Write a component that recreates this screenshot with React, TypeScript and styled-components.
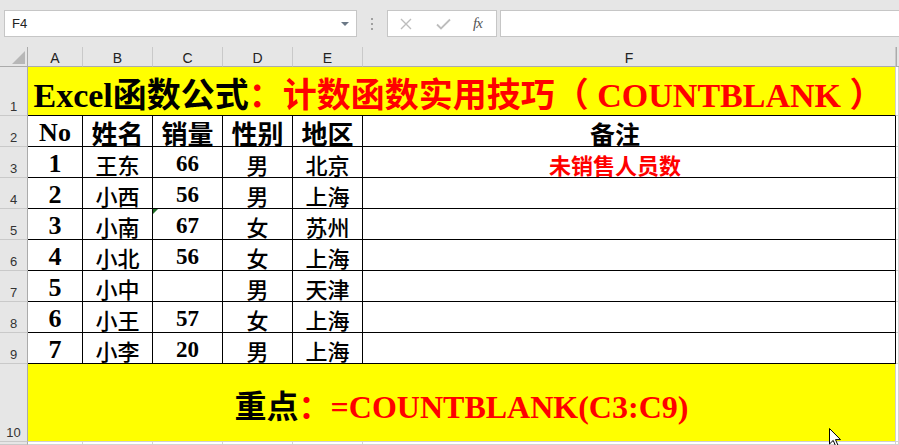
import React from "react";
import styled, { createGlobalStyle } from "styled-components";

const Global = createGlobalStyle`
  html, body { margin: 0; padding: 0; background: #ffffff; overflow: hidden; }
  body { width: 899px; height: 445px; }
  * { box-sizing: border-box; }
`;

const Page = styled.div`
  position: relative;
  width: 899px;
  height: 445px;
  overflow: hidden;
  display: flex;
  flex-direction: column;
  background: #e6e6e6;
`;

const Toolbar = styled.div`
  height: 47px;
  flex: none;
  display: flex;
  align-items: flex-start;
  padding: 10px 0 0 4px;
  background: #e6e6e6;
`;

const NameBox = styled.div`
  width: 353px;
  height: 27px;
  background: #fff;
  border: 1px solid #c6c6c6;
  display: flex;
  align-items: center;
  justify-content: space-between;
  padding: 0 7px 0 7px;
  font-family: "Liberation Sans", Arial, sans-serif;
  font-size: 13px;
  color: #222;
`;

const DropArrow = styled.span`
  width: 0;
  height: 0;
  border-left: 4px solid transparent;
  border-right: 4px solid transparent;
  border-top: 4px solid #6b7886;
`;

const Grip = styled.div`
  width: 30px;
  height: 27px;
  display: flex;
  flex-direction: column;
  align-items: center;
  justify-content: center;
  gap: 3px;
`;

const Dot = styled.span`
  width: 2px;
  height: 2px;
  background: #a0a0a0;
`;

const FxBox = styled.div`
  width: 110px;
  height: 27px;
  background: #fff;
  border: 1px solid #c6c6c6;
  display: flex;
  align-items: center;
  padding-left: 12px;
`;

const ToolIcon = styled.svg<{ $gap: number }>`
  margin-left: ${(p) => p.$gap}px;
  flex: none;
`;

const FxLabel = styled.span`
  font-family: "Liberation Serif", "Times New Roman", serif;
  font-style: italic;
  font-size: 15px;
  color: #555;
  margin-left: 22px;
  letter-spacing: -1px;
`;

const FormulaBar = styled.div`
  flex: 1;
  height: 27px;
  margin-left: 3px;
  background: #fff;
  border: 1px solid #c6c6c6;
  border-right: none;
`;

const Sheet = styled.div`
  flex: 1;
  display: grid;
  grid-template-columns: 28px 55px 70px 70px 70px 70px 533px 1fr;
  grid-template-rows: 20px 49px repeat(8, 31px) 78px 1fr;
  background: #fff;
  font-family: "Liberation Serif", "Times New Roman", "Noto Sans CJK SC", serif;
`;

const Corner = styled.div`
  position: relative;
  background: #e6e6e6;
  border-right: 1px solid #ababab;
  border-bottom: 1px solid #ababab;
  &::after {
    content: "";
    position: absolute;
    right: 2px;
    bottom: 2px;
    width: 0;
    height: 0;
    border-left: 13px solid transparent;
    border-bottom: 13px solid #b7b7b7;
  }
`;

const ColHead = styled.div`
  background: #e6e6e6;
  border-bottom: 1px solid #ababab;
  border-right: 1px solid #c9c9c9;
  display: flex;
  align-items: center;
  justify-content: center;
  padding-top: 3px;
  font-family: "Liberation Sans", Arial, sans-serif;
  font-size: 14px;
  color: #222;
`;

const RowHead = styled.div`
  background: #e6e6e6;
  border-right: 1px solid #ababab;
  border-bottom: 1px solid #c9c9c9;
  display: flex;
  align-items: flex-end;
  justify-content: center;
  padding-bottom: 1px;
  font-family: "Liberation Sans", Arial, sans-serif;
  font-size: 13px;
  line-height: 15px;
  color: #333;
`;

const Banner = styled.div<{ $size: number; $tall?: boolean }>`
  grid-column: span 6;
  background: #ffff00;
  border-right: 1px solid #d0d0d0;
  border-bottom: 1px solid ${(p) => (p.$tall ? "#d0d0d0" : "#000")};
  display: flex;
  align-items: center;
  justify-content: center;
  padding-top: 2px;
  padding-right: ${(p) => (p.$tall ? 0 : 6)}px;
  font-size: ${(p) => p.$size}px;
  font-weight: 700;
  white-space: nowrap;
  color: #000;
`;

const Red = styled.span`
  color: #ff0000;
`;

const Cell = styled.div<{ $size: number; $weight?: number; $red?: boolean; $shift?: number }>`
  position: relative;
  border-right: 1px solid #000;
  border-bottom: 1px solid #000;
  display: flex;
  align-items: center;
  justify-content: center;
  padding-top: 3px;
  padding-right: ${(p) => p.$shift ?? 0}px;
  font-size: ${(p) => p.$size}px;
  font-weight: ${(p) => p.$weight ?? 700};
  color: ${(p) => (p.$red ? "#ff0000" : "#000")};
  white-space: nowrap;
`;

const ErrorMark = styled.span`
  position: absolute;
  left: 0;
  top: 0;
  width: 0;
  height: 0;
  border-top: 5px solid #1e6b24;
  border-right: 5px solid transparent;
`;

const Blank = styled.div`
  border-right: 1px solid #d4d4d4;
  border-bottom: 1px solid #d4d4d4;
`;

const HeadBlank = styled.div`
  background: #e6e6e6;
  border-bottom: 1px solid #ababab;
  border-left: 1px solid #ababab;
`;

const Pointer = styled.svg`
  position: absolute;
  left: 829px;
  top: 428px;
`;

const cols = ["A", "B", "C", "D", "E", "F"];

type Row = { no: string; name: string; qty: string; sex: string; area: string; note?: string };

const rows: Row[] = [
  { no: "1", name: "王东", qty: "66", sex: "男", area: "北京", note: "未销售人员数" },
  { no: "2", name: "小西", qty: "56", sex: "男", area: "上海" },
  { no: "3", name: "小南", qty: "67", sex: "女", area: "苏州" },
  { no: "4", name: "小北", qty: "56", sex: "女", area: "上海" },
  { no: "5", name: "小中", qty: "", sex: "男", area: "天津" },
  { no: "6", name: "小王", qty: "57", sex: "女", area: "上海" },
  { no: "7", name: "小李", qty: "20", sex: "男", area: "上海" },
];

export default function App() {
  return (
    <>
      <Global />
      <Page>
        <Toolbar>
          <NameBox>
            <span>F4</span>
            <DropArrow />
          </NameBox>
          <Grip>
            <Dot />
            <Dot />
            <Dot />
          </Grip>
          <FxBox>
            <ToolIcon $gap={0} width="12" height="12" viewBox="0 0 12 12">
              <path d="M1 1 L11 11 M11 1 L1 11" stroke="#bdbdbd" strokeWidth="1.4" fill="none" />
            </ToolIcon>
            <ToolIcon $gap={24} width="15" height="12" viewBox="0 0 15 12">
              <path d="M1 6.5 L5 10.5 L14 1.5" stroke="#bdbdbd" strokeWidth="1.8" fill="none" />
            </ToolIcon>
            <FxLabel>fx</FxLabel>
          </FxBox>
          <FormulaBar />
        </Toolbar>
        <Sheet>
          <Corner />
          {cols.map((c) => (
            <ColHead key={c}>{c}</ColHead>
          ))}
          <HeadBlank />

          <RowHead>1</RowHead>
          <Banner $size={34}>
            Excel函数公式<Red>：计数函数实用技巧（ COUNTBLANK ）</Red>
          </Banner>
          <Blank />

          <RowHead>2</RowHead>
          <Cell $size={26}>No</Cell>
          <Cell $size={26}>姓名</Cell>
          <Cell $size={26}>销量</Cell>
          <Cell $size={26}>性别</Cell>
          <Cell $size={26}>地区</Cell>
          <Cell $size={25} $shift={28}>备注</Cell>
          <Blank />

          {rows.map((r, i) => (
            <React.Fragment key={r.no}>
              <RowHead>{i + 3}</RowHead>
              <Cell $size={26}>{r.no}</Cell>
              <Cell $size={22} $weight={500}>{r.name}</Cell>
              <Cell $size={23}>
                {i === 2 && <ErrorMark />}
                {r.qty}
              </Cell>
              <Cell $size={22} $weight={500}>{r.sex}</Cell>
              <Cell $size={22} $weight={500}>{r.area}</Cell>
              <Cell $size={22} $red $shift={28}>{r.note ?? ""}</Cell>
              <Blank />
            </React.Fragment>
          ))}

          <RowHead>10</RowHead>
          <Banner $size={32} $tall>
            重点<Red>：=COUNTBLANK(C3:C9)</Red>
          </Banner>
          <Blank />

          <RowHead />
          {cols.map((c) => (
            <Blank key={c} />
          ))}
          <Blank />
        </Sheet>
        <Pointer width="13" height="20" viewBox="0 0 13 20">
          <path d="M0.5 0.5 L0.5 16 L4.2 12.4 L6.8 18.4 L9 17.4 L6.5 11.6 L11.5 11.6 Z" fill="#fff" stroke="#000" strokeWidth="1" />
        </Pointer>
      </Page>
    </>
  );
}
